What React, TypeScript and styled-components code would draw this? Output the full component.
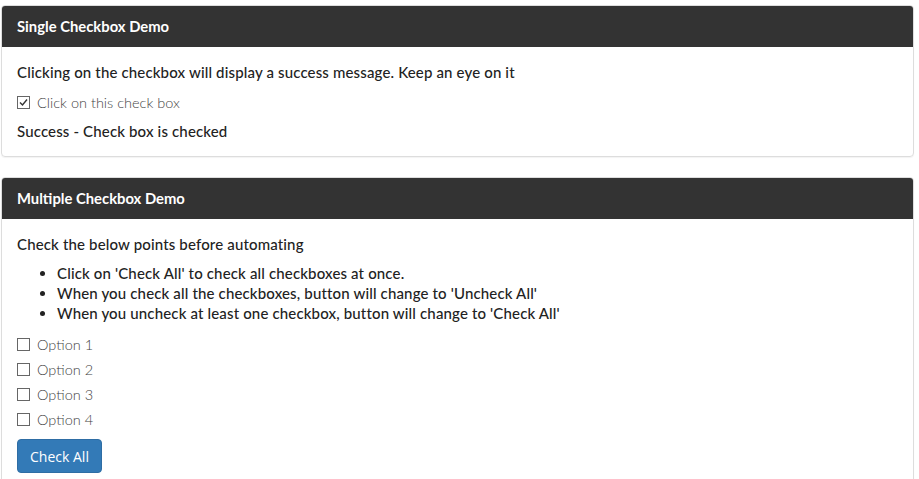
import React from 'react';
import styled, { createGlobalStyle } from 'styled-components';

const GlobalStyle = createGlobalStyle`
	body {
		margin: 0;
		background: #fff;
		font-family: Lato, "Liberation Sans", sans-serif;
		color: #333;
	}
`;

const Page = styled.div`
	padding: 5px 5px 0 1px;
	display: flex;
	flex-direction: column;
	gap: 20px;
`;

const Panel = styled.section`
	border: 1px solid #ddd;
	border-radius: 4px;
	box-shadow: 0 1px 1px rgba(0, 0, 0, 0.05);
	overflow: hidden;
`;

const PanelHeading = styled.div`
	background: #333;
	color: #fff;
	height: 40px;
	padding: 0 15px;
	display: flex;
	align-items: center;
	font-size: 14.8px;
	font-weight: 700;
	border-bottom: 1px solid #333;
`;

const PanelBody = styled.div`
	padding: 15px 15px 15px;
`;

const Text = styled.p<{ $gap?: number }>`
	margin: 0 0 ${(p) => p.$gap ?? 10}px;
	font-size: 15px;
	font-weight: 500;
	letter-spacing: 0.15px;
	line-height: 20px;
	color: #222;
`;

const Points = styled.ul`
	margin: 0 0 11px;
	padding-left: 40px;
	font-size: 15px;
	font-weight: 500;
	letter-spacing: 0.15px;
	line-height: 20px;
	color: #222;
`;

const CheckRow = styled.label<{ $gap?: number }>`
	display: flex;
	align-items: center;
	gap: 7px;
	height: 20px;
	margin-bottom: ${(p) => p.$gap ?? 5}px;
	font-size: 14.5px;
	font-weight: 300;
	color: #444;
`;

const Box = styled.span`
	width: 11px;
	height: 11px;
	border: 1px solid #666;
	background: #fff;
	display: flex;
	align-items: center;
	justify-content: center;
	flex-shrink: 0;
`;

const Button = styled.button`
	margin-top: 5px;
	width: 85px;
	height: 34px;
	background: #337ab7;
	border: 1px solid #2e6da4;
	border-radius: 4px;
	color: #fff;
	font-family: "Open Sans", "Liberation Sans", sans-serif;
	font-size: 14px;
	font-weight: 400;
	padding: 0;
`;

const Check: React.FC<{ checked?: boolean }> = ({ checked }) => (
	<Box>
		{checked && (
			<svg width="9" height="9" viewBox="0 0 9 9">
				<path d="M1 4.5 L3.5 7 L8 1.5" fill="none" stroke="#333" strokeWidth="1.4" />
			</svg>
		)}
	</Box>
);

const options = ['Option 1', 'Option 2', 'Option 3', 'Option 4'];

export default function App() {
	return (
		<>
			<GlobalStyle />
			<Page>
				<Panel>
					<PanelHeading>Single Checkbox Demo</PanelHeading>
					<PanelBody>
						<Text>Clicking on the checkbox will display a success message. Keep an eye on it</Text>
						<CheckRow $gap={9}>
							<Check checked />
							Click on this check box
						</CheckRow>
						<Text $gap={0}>Success - Check box is checked</Text>
					</PanelBody>
				</Panel>
				<Panel>
					<PanelHeading>Multiple Checkbox Demo</PanelHeading>
					<PanelBody>
						<Text $gap={9}>Check the below points before automating</Text>
						<Points>
							<li>Click on 'Check All' to check all checkboxes at once.</li>
							<li>When you check all the checkboxes, button will change to 'Uncheck All'</li>
							<li>When you uncheck at least one checkbox, button will change to 'Check All'</li>
						</Points>
						{options.map((o) => (
							<CheckRow key={o}>
								<Check />
								{o}
							</CheckRow>
						))}
						<Button>Check All</Button>
					</PanelBody>
				</Panel>
			</Page>
		</>
	);
}
